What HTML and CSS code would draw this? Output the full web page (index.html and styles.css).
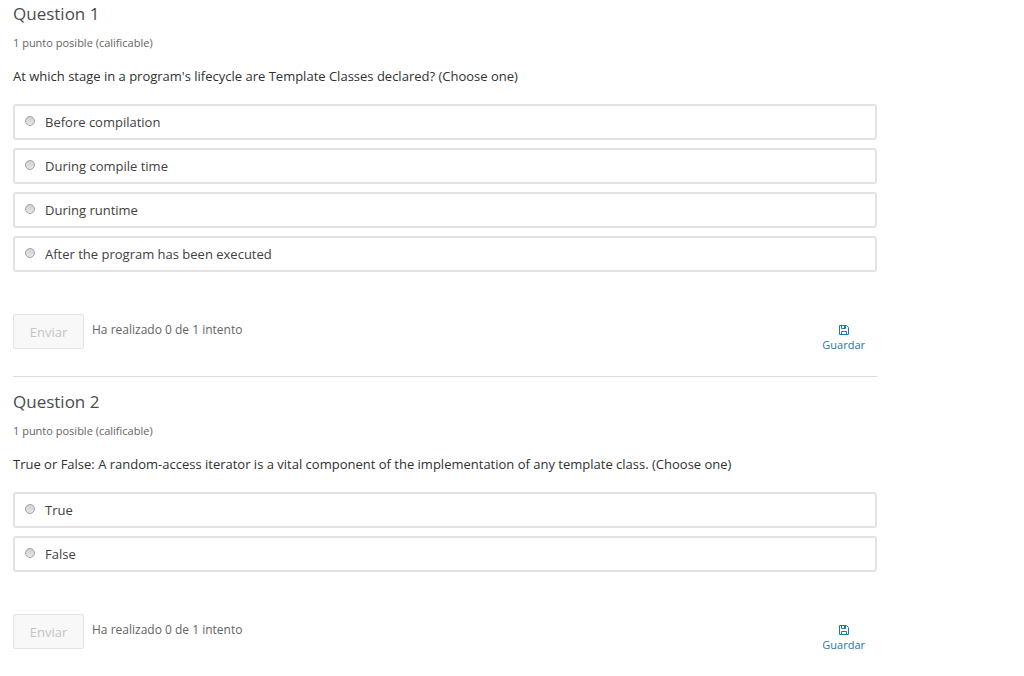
FILE: index.html
```html
<!DOCTYPE html>
<html lang="es">

<head>
    <meta charset="UTF-8">
    <meta name="viewport" content="width=device-width, initial-scale=1.0">
    <title>Quiz</title>
    <link rel="stylesheet" href="styles.css">
</head>

<body>
<main class="wrap">
    <form class="problem">
        <h3>Question 1</h3>
        <p class="progress">1 punto posible (calificable)</p>
        <fieldset>
            <legend>At which stage in a program's lifecycle are Template Classes declared? (Choose one)</legend>
            <label><input type="radio" name="q1" value="0"> Before compilation</label>
            <label><input type="radio" name="q1" value="1"> During compile time</label>
            <label><input type="radio" name="q1" value="2"> During runtime</label>
            <label><input type="radio" name="q1" value="3"> After the program has been executed</label>
        </fieldset>
        <div class="action">
            <button type="submit" class="submit" disabled>Enviar</button>
            <span class="feedback">Ha realizado 0 de 1 intento</span>
            <button type="button" class="save">
                <svg viewBox="0 0 12 12" aria-hidden="true">
                    <path d="M1.5 1.5h7l2 2v7h-9z"/>
                    <path d="M3.5 1.500v3h4v-3M6.500 2v2M3.500 10.500v-3h5v3"/>
                </svg>
                Guardar
            </button>
        </div>
    </form>

    <form class="problem">
        <h3>Question 2</h3>
        <p class="progress">1 punto posible (calificable)</p>
        <fieldset>
            <legend>True or False: A random-access iterator is a vital component of the implementation of any template class. (Choose one)</legend>
            <label><input type="radio" name="q2" value="true"> True</label>
            <label><input type="radio" name="q2" value="false"> False</label>
        </fieldset>
        <div class="action">
            <button type="submit" class="submit" disabled>Enviar</button>
            <span class="feedback">Ha realizado 0 de 1 intento</span>
            <button type="button" class="save">
                <svg viewBox="0 0 12 12" aria-hidden="true">
                    <path d="M1.5 1.5h7l2 2v7h-9z"/>
                    <path d="M3.5 1.500v3h4v-3M6.500 2v2M3.500 10.500v-3h5v3"/>
                </svg>
                Guardar
            </button>
        </div>
    </form>
</main>
</body>

</html>
```

FILE: styles.css
```css
* {
    box-sizing: border-box;
}

body {
    margin: 0;
    background: #fff;
    color: #414141;
    font-family: "Open Sans", sans-serif;
    font-size: 13px;
    line-height: 20px;
}

.wrap {
    max-width: 890px;
    padding: 2px 13px;
}

.problem + .problem {
    margin-top: 22px;
    padding-top: 13px;
    border-top: 1px solid #ddd;
}

h3 {
    margin: 0;
    font-size: 17px;
    font-weight: 400;
    line-height: 24px;
    color: #4c4c4c;
}

.progress {
    margin: 7px 0 13px;
    font-size: 11px;
    color: #646464;
}

fieldset {
    display: flex;
    flex-direction: column;
    gap: 8px;
    margin: 0;
    padding: 0;
    border: 0;
    min-width: 0;
}

legend {
    margin-bottom: 18px;
    padding: 0;
    color: #313131;
}

fieldset label {
    display: flex;
    align-items: center;
    gap: 9px;
    height: 36px;
    padding: 0 10px;
    border: 2px solid #e2e2e2;
    border-radius: 3px;
}

input[type="radio"] {
    appearance: none;
    width: 10px;
    height: 10px;
    margin: 0 1px 2px 0;
    border: 1px solid #a4a4a4;
    border-radius: 50%;
    background: linear-gradient(#d0d0d0, #e6e6e6);
}

input[type="radio"]:checked {
    background: #0075b4;
}

.action {
    display: flex;
    align-items: flex-start;
    margin-top: 42px;
}

button {
    font-family: inherit;
    cursor: pointer;
}

.submit {
    width: 71px;
    height: 35px;
    padding: 0;
    border: 1px solid #e4e4e4;
    border-radius: 2px;
    background: #f8f8f8;
    color: #c4c4c4;
    font-size: 13px;
}

.submit:disabled {
    cursor: default;
}

.feedback {
    margin-left: 8px;
    font-size: 12px;
    line-height: 32px;
    color: #646464;
}

.save {
    display: flex;
    flex-direction: column;
    align-items: center;
    margin-left: auto;
    padding: 10px 12px 0;
    border: 0;
    background: none;
    color: #1f76a8;
    font-size: 11px;
    line-height: 18px;
}

.save svg {
    width: 12px;
    height: 12px;
    fill: none;
    stroke: currentColor;
}
```
